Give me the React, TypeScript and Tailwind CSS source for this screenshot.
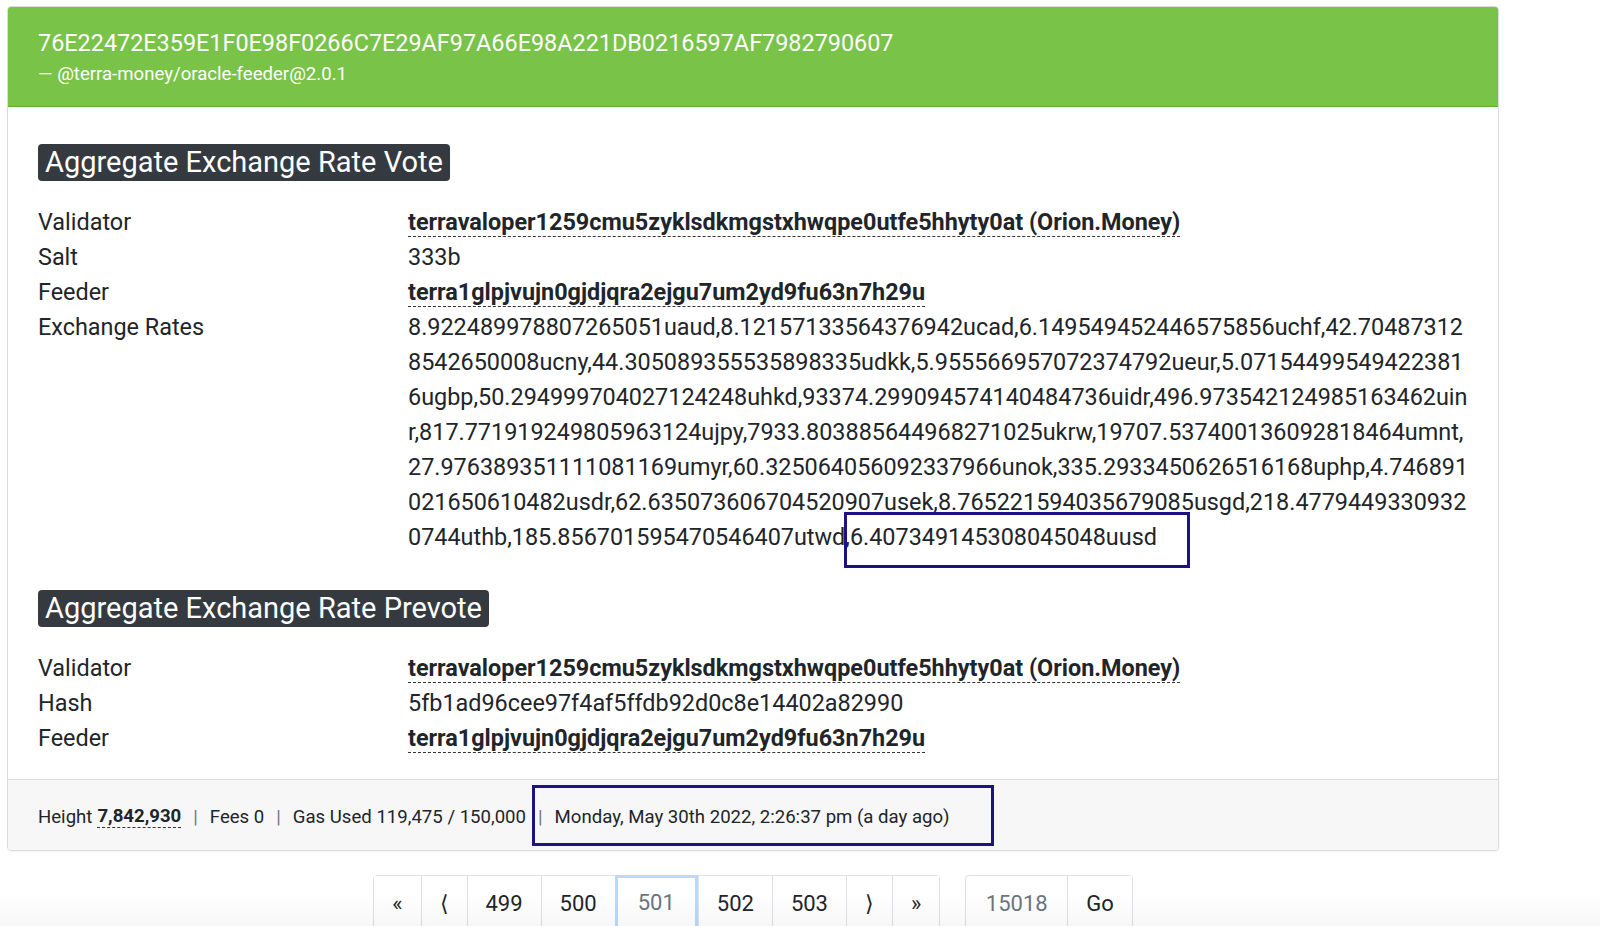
import React from "react";

const rateLines = [
  "8.922489978807265051uaud,8.12157133564376942ucad,6.149549452446575856uchf,42.70487312",
  "8542650008ucny,44.305089355535898335udkk,5.955566957072374792ueur,5.07154499549422381",
  "6ugbp,50.294999704027124248uhkd,93374.299094574140484736uidr,496.973542124985163462uin",
  "r,817.771919249805963124ujpy,7933.803885644968271025ukrw,19707.537400136092818464umnt,",
  "27.976389351111081169umyr,60.325064056092337966unok,335.2933450626516168uphp,4.746891",
  "021650610482usdr,62.635073606704520907usek,8.765221594035679085usgd,218.4779449330932",
];

const linkStyle = "font-bold border-b border-dashed border-[#333]";

const Row = ({ label, children }: { label: string; children: React.ReactNode }) => (
  <div className="flex leading-[35px]">
    <div className="w-[370px] shrink-0">{label}</div>
    <div className="flex-1 min-w-0">{children}</div>
  </div>
);

const SectionTitle = ({ children }: { children: React.ReactNode }) => (
  <div className="flex">
    <h2 className="bg-[#343a40] text-white text-[29px] leading-[37px] px-[7px] rounded-[4px]">{children}</h2>
  </div>
);

const pageBtn = "h-[56px] flex items-center justify-center px-[18px] pb-[1px] border-l border-[#dee2e6] bg-white";

export default function App() {
  return (
    <div className="relative min-h-screen bg-white text-[#212529] font-['Roboto',sans-serif] pl-[7px] pt-[6px] overflow-hidden">
      <div className="w-[1492px]">
        <div className="border border-[#dcdcdc] rounded-[4px] overflow-hidden shadow-[0_1px_2px_rgba(0,0,0,0.05)]">
          {/* header */}
          <div className="bg-[#79c349] border-b border-[#5fae2e] px-[30px] pt-[20px] h-[100px] text-white">
            <div className="text-[23.4px] leading-[32px]">76E22472E359E1F0E98F0266C7E29AF97A66E98A221DB0216597AF7982790607</div>
            <div className="text-[18.6px] leading-[30px]">— @terra-money/oracle-feeder@2.0.1</div>
          </div>

          {/* body */}
          <div className="px-[30px] pt-[37px] pb-[23px] text-[23.4px]">
            <SectionTitle>Aggregate Exchange Rate Vote</SectionTitle>
            <div className="mt-[24px]">
              <Row label="Validator">
                <span className={linkStyle}>terravaloper1259cmu5zyklsdkmgstxhwqpe0utfe5hhyty0at (Orion.Money)</span>
              </Row>
              <Row label="Salt">333b</Row>
              <Row label="Feeder">
                <span className={linkStyle}>terra1glpjvujn0gjdjqra2ejgu7um2yd9fu63n7h29u</span>
              </Row>
              <Row label="Exchange Rates">
                {rateLines.map((l) => (
                  <div key={l} className="whitespace-nowrap">{l}</div>
                ))}
                <div className="whitespace-nowrap">
                  0744uthb,185.856701595470546407utwd,
                  <span className="relative">
                    6.407349145308045048uusd
                    <span className="absolute left-[-6px] right-[-33px] top-[-11px] bottom-[-17px] border-[3px] border-[#1d1184]"></span>
                  </span>
                </div>
              </Row>
            </div>

            <div className="mt-[35px]">
              <SectionTitle>Aggregate Exchange Rate Prevote</SectionTitle>
            </div>
            <div className="mt-[24px]">
              <Row label="Validator">
                <span className={linkStyle}>terravaloper1259cmu5zyklsdkmgstxhwqpe0utfe5hhyty0at (Orion.Money)</span>
              </Row>
              <Row label="Hash">5fb1ad96cee97f4af5ffdb92d0c8e14402a82990</Row>
              <Row label="Feeder">
                <span className={linkStyle}>terra1glpjvujn0gjdjqra2ejgu7um2yd9fu63n7h29u</span>
              </Row>
            </div>
          </div>

          {/* footer */}
          <div className="bg-[#f7f7f7] border-t border-[#dcdcdc] px-[30px] pt-[3px] h-[71px] flex items-center text-[18.6px] leading-[22px]">
            <span>Height</span>
            <span className="ml-[5px] font-bold border-b border-dashed border-[#333]">7,842,930</span>
            <span className="mx-[12px] text-[#6c757d]">|</span>
            <span>Fees 0</span>
            <span className="mx-[12px] text-[#6c757d]">|</span>
            <span>Gas Used 119,475 / 150,000</span>
            <span className="relative ml-[12px]">
              <span className="text-[#6c757d]">|</span>
              <span className="ml-[12px]">Monday, May 30th 2022, 2:26:37 pm (a day ago)</span>
              <span className="absolute left-[-6px] right-[-44px] top-[-21px] bottom-[-18px] border-[3px] border-[#1d1184]"></span>
            </span>
          </div>
        </div>

        {/* pagination */}
        <div className="flex justify-center gap-[25px] mt-[24px] text-[22px]">
          <div className="flex border border-[#dee2e6] rounded-[4px] [&>*:first-child]:border-l-0 bg-white">
            <div className={pageBtn}>«</div>
            <div className={pageBtn}>⟨</div>
            <div className={pageBtn}>499</div>
            <div className={pageBtn}>500</div>
            <div className="h-[56px] flex items-center justify-center px-[20px] pb-[1px] border-[3px] border-[#b9dafd] text-[#6c757d] -my-[1px]">501</div>
            <div className={pageBtn}>502</div>
            <div className={pageBtn}>503</div>
            <div className={pageBtn}>⟩</div>
            <div className={pageBtn}>»</div>
          </div>
          <div className="flex border border-[#dee2e6] rounded-[4px] bg-white">
            <div className="h-[56px] w-[101px] pb-[1px] flex items-center justify-center text-[#6c757d]">15018</div>
            <div className={pageBtn}>Go</div>
          </div>
        </div>
      </div>

      {/* soft fade at the bottom edge of the window */}
      <div className="pointer-events-none absolute inset-x-0 bottom-0 h-[40px] bg-gradient-to-b from-transparent to-black/[0.04]"></div>
    </div>
  );
}
